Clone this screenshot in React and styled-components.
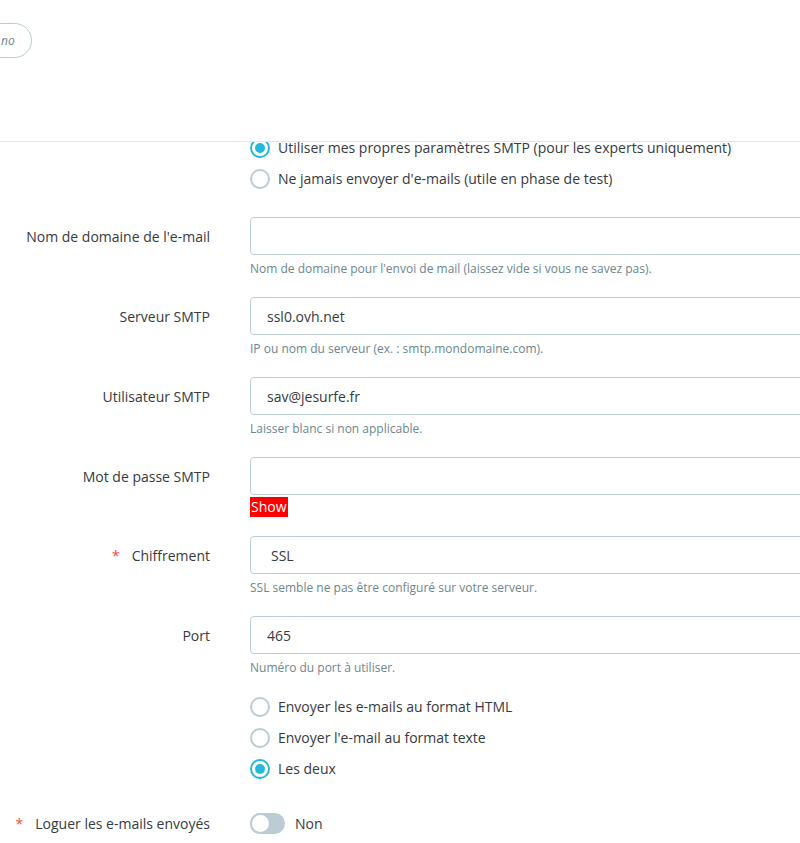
import React from 'react'
import styled, { createGlobalStyle } from 'styled-components'

const GlobalStyle = createGlobalStyle`
  html, body {
    margin: 0;
    padding: 0;
    background: #fff;
    overflow: hidden;
  }
  body {
    font-family: 'Open Sans', 'Noto Sans', sans-serif;
    color: #363a41;
  }
`

const Header = styled.header`
  position: fixed;
  top: 0;
  left: 0;
  right: 0;
  height: 141px;
  background: #fff;
  border-bottom: 1px solid #e2e5e8;
  overflow: hidden;
  z-index: 2;
`

const HeaderRow = styled.div`
  display: flex;
  align-items: center;
  padding-top: 23px;
`

const PillButton = styled.button`
  height: 35px;
  margin-left: -40px;
  padding: 0 16px 0 40px;
  border: 1px solid #bbcdd2;
  border-radius: 18px;
  background: #fff;
  font-family: 'Open Sans', sans-serif;
  font-style: italic;
  font-size: 12px;
  color: #6c868e;
`

const Content = styled.main`
  padding-top: 132px;
  width: 100%;
  overflow: hidden;
`

const Group = styled.div`
  display: grid;
  grid-template-columns: 210px 600px;
  column-gap: 40px;
  margin-bottom: ${p => p.$mb ?? 20}px;
`

const Label = styled.label`
  display: flex;
  justify-content: flex-end;
  align-items: center;
  height: ${p => p.$h ?? 38}px;
  font-size: 14px;
  color: #363a41;
  white-space: nowrap;
`

const Required = styled.span`
  color: #f54c3e;
  margin-right: 12px;
`

const Field = styled.div`
  display: flex;
  flex-direction: column;
  align-items: flex-start;
`

const Input = styled.input`
  box-sizing: border-box;
  width: 100%;
  height: 38px;
  padding: 0 16px;
  border: 1px solid #bbcdd2;
  border-radius: 4px;
  font-family: 'Open Sans', sans-serif;
  font-size: 14px;
  color: #363a41;
  background: #fff;
  outline: none;
`

const Select = styled.div`
  box-sizing: border-box;
  width: 100%;
  height: 38px;
  padding: 0 20px;
  display: flex;
  align-items: center;
  border: 1px solid #bbcdd2;
  border-radius: 4px;
  font-size: 14px;
  color: #363a41;
`

const Help = styled.small`
  display: block;
  margin-top: 6px;
  font-size: 12px;
  line-height: 16px;
  color: #6c868e;
`

const ShowButton = styled.span`
  margin-top: 2px;
  height: 20px;
  line-height: 20px;
  padding: 0 1px;
  background: #ff0000;
  color: #fff;
  font-size: 14px;
`

const RadioList = styled.div`
  display: flex;
  flex-direction: column;
`

const RadioRow = styled.label`
  display: flex;
  align-items: center;
  height: 31px;
  gap: 8px;
  font-size: 14px;
  color: #363a41;
  white-space: nowrap;
`

const RadioCircle = styled.span`
  box-sizing: border-box;
  width: 20px;
  height: 20px;
  border-radius: 50%;
  border: 2px solid ${p => (p.$checked ? '#25b9d7' : '#bbcdd2')};
  display: flex;
  align-items: center;
  justify-content: center;
  &::after {
    content: '';
    width: 10px;
    height: 10px;
    border-radius: 50%;
    background: ${p => (p.$checked ? '#25b9d7' : 'transparent')};
  }
`

const SwitchRow = styled.div`
  display: flex;
  align-items: center;
  height: 21px;
  gap: 10px;
  font-size: 14px;
`

const Track = styled.span`
  position: relative;
  width: 35px;
  height: 21px;
  border-radius: 11px;
  background: #bbcdd2;
`

const Knob = styled.span`
  position: absolute;
  top: 0;
  left: 0;
  box-sizing: border-box;
  width: 21px;
  height: 21px;
  border-radius: 50%;
  background: #fff;
  border: 2px solid #bbcdd2;
`

const Radio = ({ checked, children }) => (
  <RadioRow>
    <RadioCircle $checked={checked} />
    {children}
  </RadioRow>
)

const TextRow = ({ label, value, help, required, mb }) => (
  <Group $mb={mb}>
    <Label>
      {required && <Required>*</Required>}
      {label}
    </Label>
    <Field>
      <Input defaultValue={value} />
      {help && <Help>{help}</Help>}
    </Field>
  </Group>
)

export default function App() {
  return (
    <>
      <GlobalStyle />
      <Header>
        <HeaderRow>
          <PillButton>no</PillButton>
        </HeaderRow>
      </Header>
      <Content>
        <Group $mb={23}>
          <span />
          <RadioList>
            <Radio checked>Utiliser mes propres paramètres SMTP (pour les experts uniquement)</Radio>
            <Radio>Ne jamais envoyer d'e-mails (utile en phase de test)</Radio>
          </RadioList>
        </Group>

        <TextRow
          label="Nom de domaine de l'e-mail"
          value=""
          help="Nom de domaine pour l'envoi de mail (laissez vide si vous ne savez pas)."
        />
        <TextRow
          label="Serveur SMTP"
          value="ssl0.ovh.net"
          help="IP ou nom du serveur (ex. : smtp.mondomaine.com)."
        />
        <TextRow
          label="Utilisateur SMTP"
          value="sav@jesurfe.fr"
          help="Laisser blanc si non applicable."
        />

        <Group $mb={19}>
          <Label>Mot de passe SMTP</Label>
          <Field>
            <Input type="password" />
            <ShowButton>Show</ShowButton>
          </Field>
        </Group>

        <Group>
          <Label>
            <Required>*</Required>
            Chiffrement
          </Label>
          <Field>
            <Select>SSL</Select>
            <Help>SSL semble ne pas être configuré sur votre serveur.</Help>
          </Field>
        </Group>

        <TextRow label="Port" value="465" help="Numéro du port à utiliser." mb={15} />

        <Group $mb={29}>
          <span />
          <RadioList>
            <Radio>Envoyer les e-mails au format HTML</Radio>
            <Radio>Envoyer l'e-mail au format texte</Radio>
            <Radio checked>Les deux</Radio>
          </RadioList>
        </Group>

        <Group>
          <Label $h={21}>
            <Required>*</Required>
            Loguer les e-mails envoyés
          </Label>
          <SwitchRow>
            <Track>
              <Knob />
            </Track>
            Non
          </SwitchRow>
        </Group>
      </Content>
    </>
  )
}
